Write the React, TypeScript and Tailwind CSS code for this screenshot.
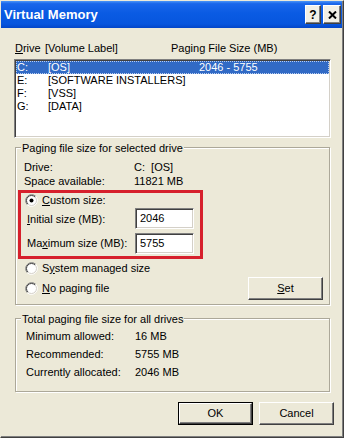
import React from "react";

function Radio({ checked }: { checked?: boolean }) {
  return (
    <svg width="13" height="13" viewBox="0 0 13 13" className="shrink-0">
      <circle cx="6.5" cy="6.5" r="5.5" fill="#fff" />
      <path d="M2.26 10.74 A6 6 0 0 1 10.74 2.26" fill="none" stroke="#808080" />
      <path d="M10.74 2.26 A6 6 0 0 1 2.26 10.74" fill="none" stroke="#ffffff" />
      <path d="M2.96 10.04 A5 5 0 0 1 10.04 2.96" fill="none" stroke="#404040" />
      <path d="M10.04 2.96 A5 5 0 0 1 2.96 10.04" fill="none" stroke="#D4D0C8" />
      {checked && <circle cx="6.5" cy="6.5" r="2" fill="#000" />}
    </svg>
  );
}

const raised =
  "bg-[#ECE9D8] border border-t-white border-l-white border-r-[#404040] border-b-[#404040] shadow-[inset_-1px_-1px_0_#808080]";
const sunken =
  "bg-white border border-t-[#808080] border-l-[#808080] border-b-white border-r-white shadow-[inset_1px_1px_0_#404040,inset_-1px_-1px_0_#D4D0C8]";
const group =
  "relative ml-[14px] w-[315px] border border-[#ACA899] shadow-[inset_1px_1px_0_#fff,1px_1px_0_#fff]";

export default function App() {
  return (
    <div className="w-[344px] h-[438px] flex bg-[#ECE9D8] border border-[#404040] border-l-[#ECE9D8] border-t-[#ECE9D8] font-['Liberation_Sans',Arial,sans-serif] text-[11px] text-black">
      <div className="flex-1 min-w-0 flex flex-col border-r border-b border-[#808080]">
        {/* Title bar */}
        <div className="h-[27px] shrink-0 flex items-center pl-[3px] pr-[1px] bg-[linear-gradient(to_bottom,#4a95f8_0%,#1a66ea_10%,#0a5be3_45%,#0756de_85%,#0346c8_100%)]">
          <span className="text-white font-bold text-[13px] leading-none">Virtual Memory</span>
          <div className="ml-auto flex gap-[2px]">
            <div className={`w-[16px] h-[19px] flex items-center justify-center bg-[#F2F0E6] ${"border border-t-white border-l-white border-r-[#404040] border-b-[#404040] shadow-[inset_-1px_-1px_0_#808080]"}`}>
              <span className="font-bold text-[12px] leading-none">?</span>
            </div>
            <div className="w-[18px] h-[19px] flex items-center justify-center bg-[#F2F0E6] border border-t-white border-l-white border-r-[#404040] border-b-[#404040] shadow-[inset_-1px_-1px_0_#808080]">
              <svg width="9" height="8" viewBox="0 0 9 8">
                <path d="M1 0.5 L8 7.5 M8 0.5 L1 7.5" stroke="#000" strokeWidth="2" />
              </svg>
            </div>
          </div>
        </div>

        {/* List header */}
        <div className="mt-[14px] ml-[14px] flex leading-[13px] h-[13px]">
          <span className="w-[30px]">
            <u>D</u>rive
          </span>
          <span className="w-[126px]">[Volume Label]</span>
          <span>Paging File Size (MB)</span>
        </div>

        {/* List box */}
        <div className={`mt-[4px] ml-[13px] w-[317px] h-[79px] ${sunken}`}>
          <div className="pt-[1px] px-[1px]">
            {[
              ["C:", "[OS]", "2046 - 5755", true],
              ["E:", "[SOFTWARE INSTALLERS]", "", false],
              ["F:", "[VSS]", "", false],
              ["G:", "[DATA]", "", false],
            ].map(([d, l, s, sel]) => (
              <div
                key={d as string}
                className={`flex h-[13px] leading-[13px] pl-[1px] ${
                  sel ? "bg-[#316AC5] text-white outline outline-1 outline-dotted outline-[#b8cdf0] -outline-offset-1" : ""
                }`}
              >
                <span className="w-[31px]">{d}</span>
                <span className="w-[151px] whitespace-nowrap">{l}</span>
                <span>{s}</span>
              </div>
            ))}
          </div>
        </div>

        {/* Group 1 */}
        <div className={`mt-[9px] ${group}`}>
          <span className="absolute left-[5px] top-[-6px] px-[1px] bg-[#ECE9D8] leading-[13px]">
            Paging file size for selected drive
          </span>
          <div className="mt-[12px] pl-[8px] leading-[14px]">
            <div className="flex">
              <span className="w-[110px]">Drive:</span>
              <span>C:&nbsp;&nbsp;[OS]</span>
            </div>
            <div className="flex">
              <span className="w-[110px]">Space available:</span>
              <span>11821 MB</span>
            </div>
          </div>

          {/* red highlighted section */}
          <div className="mt-[2px] ml-[2px] w-[185px] border-[3px] border-[#D6202C] pb-[2px]">
            <div className="h-[14px] pl-[4px] flex items-center gap-[4px] leading-[14px]">
              <Radio checked />
              <span>
                <u>C</u>ustom size:
              </span>
            </div>
            <div className="h-[22px] pl-[6px] flex items-center">
              <span className="w-[108px] pt-[2px]">
                <u>I</u>nitial size (MB):
              </span>
              <div className={`w-[59px] h-[21px] pl-[4px] flex items-center ${sunken}`}>2046</div>
            </div>
            <div className="mt-[3px] h-[22px] pl-[6px] flex items-center">
              <span className="w-[108px] pt-[1px]">
                Ma<u>x</u>imum size (MB):
              </span>
              <div className={`w-[59px] h-[21px] pl-[4px] flex items-center ${sunken}`}>5755</div>
            </div>
          </div>

          <div className="mt-[2px] h-[39px] flex pb-0">
            <div className="pl-[9px] self-start leading-[14px]">
              <div className="h-[14px] flex items-center gap-[4px]">
                <Radio />
                <span>
                  S<u>y</u>stem managed size
                </span>
              </div>
              <div className="mt-[6px] h-[14px] flex items-center gap-[4px]">
                <Radio />
                <span>
                  <u>N</u>o paging file
                </span>
              </div>
            </div>
            <div className={`ml-auto mr-[6px] self-end w-[75px] h-[23px] flex items-center justify-center ${raised}`}>
              <span>
                <u>S</u>et
              </span>
            </div>
          </div>
          <div className="h-[4px]" />
        </div>

        {/* Group 2 */}
        <div className={`mt-[13px] ${group}`}>
          <span className="absolute left-[5px] top-[-6px] px-[1px] bg-[#ECE9D8] leading-[13px]">
            Total paging file size for all drives
          </span>
          <div className="mt-[8px] pl-[10px] pb-[10px] leading-[18px]">
            <div className="flex">
              <span className="w-[109px]">Minimum allowed:</span>
              <span>16 MB</span>
            </div>
            <div className="flex">
              <span className="w-[109px]">Recommended:</span>
              <span>5755 MB</span>
            </div>
            <div className="flex">
              <span className="w-[109px]">Currently allocated:</span>
              <span>2046 MB</span>
            </div>
          </div>
        </div>

        {/* Buttons */}
        <div className="mt-[10px] pr-[8px] flex justify-end gap-[6px]">
          <div className="w-[75px] h-[23px] border border-black flex">
            <div className={`flex-1 flex items-center justify-center ${raised}`}>OK</div>
          </div>
          <div className={`w-[75px] h-[23px] flex items-center justify-center ${raised}`}>Cancel</div>
        </div>
      </div>
    </div>
  );
}
